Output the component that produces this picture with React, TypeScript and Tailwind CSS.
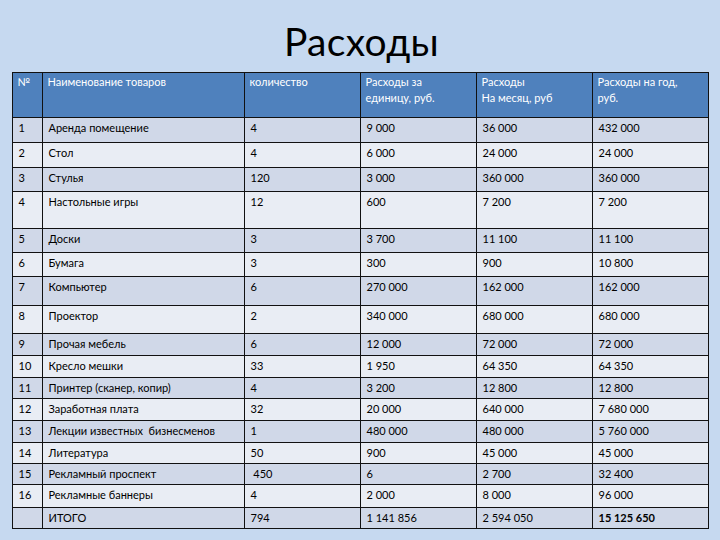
const headers = [
  "№",
  "Наименование товаров",
  "количество",
  "Расходы за\nединицу, руб.",
  "Расходы\nНа месяц, руб",
  "Расходы на год,\nруб.",
];

const colWidths = ["w-[30px]", "w-[202px]", "w-[116px]", "w-[116px]", "w-[116px]", "w-[116px]"];

interface Row {
  n: string;
  name: string;
  qty: string;
  unit: string;
  month: string;
  year: string;
  h: string;
}

const rows: Row[] = [
  { n: "1", name: "Аренда помещение", qty: "4", unit: "9 000", month: "36 000", year: "432 000", h: "h-[25px]" },
  { n: "2", name: "Стол", qty: "4", unit: "6 000", month: "24 000", year: "24 000", h: "h-[25px]" },
  { n: "3", name: "Стулья", qty: "120", unit: "3 000", month: "360 000", year: "360 000", h: "h-[24px]" },
  { n: "4", name: "Настольные игры", qty: "12", unit: "600", month: "7 200", year: "7 200", h: "h-[37px]" },
  { n: "5", name: "Доски", qty: "3", unit: "3 700", month: "11 100", year: "11 100", h: "h-[24px]" },
  { n: "6", name: "Бумага", qty: "3", unit: "300", month: "900", year: "10 800", h: "h-[24px]" },
  { n: "7", name: "Компьютер", qty: "6", unit: "270 000", month: "162 000", year: "162 000", h: "h-[29px]" },
  { n: "8", name: "Проектор", qty: "2", unit: "340 000", month: "680 000", year: "680 000", h: "h-[28px]" },
  { n: "9", name: "Прочая мебель", qty: "6", unit: "12 000", month: "72 000", year: "72 000", h: "h-[22px]" },
  { n: "10", name: "Кресло мешки", qty: "33", unit: "1 950", month: "64 350", year: "64 350", h: "h-[22px]" },
  { n: "11", name: "Принтер (сканер, копир)", qty: "4", unit: "3 200", month: "12 800", year: "12 800", h: "h-[21px]" },
  { n: "12", name: "Заработная плата", qty: "32", unit: "20 000", month: "640 000", year: "7 680 000", h: "h-[22px]" },
  { n: "13", name: "Лекции известных  бизнесменов", qty: "1", unit: "480 000", month: "480 000", year: "5 760 000", h: "h-[22px]" },
  { n: "14", name: "Литература", qty: "50", unit: "900", month: "45 000", year: "45 000", h: "h-[21px]" },
  { n: "15", name: "Рекламный проспект", qty: " 450", unit: "6", month: "2 700", year: "32 400", h: "h-[21px]" },
  { n: "16", name: "Рекламные баннеры", qty: "4", unit: "2 000", month: "8 000", year: "96 000", h: "h-[23px]" },
  { n: "", name: "ИТОГО", qty: "794", unit: "1 141 856", month: "2 594 050", year: "15 125 650", h: "h-[21px]" },
];

export default function App() {
  return (
    <div
      className="w-[720px] h-[540px] bg-[#c6d9f0] overflow-hidden flex flex-col items-center"
      style={{ fontFamily: "Lato, 'Open Sans', sans-serif" }}
    >
      <h1 className="mt-[21px] h-[51px] text-[39px] leading-[40px] text-black tracking-[0.3px] pl-[3px]">Расходы</h1>
      <table className="border-collapse border-[1.5px] border-[#111] text-[11px] text-black">
        <thead>
          <tr className="h-[45px] bg-[#4f81bd] text-white">
            {headers.map((h, i) => (
              <th
                key={i}
                className={`${colWidths[i]} border border-[#111] align-top text-left font-normal px-[5px] pt-[1px] leading-[16px] whitespace-pre-line`}
              >
                {h}
              </th>
            ))}
          </tr>
        </thead>
        <tbody>
          {rows.map((r, i) => (
            <tr key={i} className={`${r.h} ${i % 2 === 0 ? "bg-[#d0d8e8]" : "bg-[#e9edf4]"}`}>
              {[r.n, r.name, r.qty, r.unit, r.month, r.year].map((c, j) => (
                <td
                  key={j}
                  className={`border border-[#111] align-top pl-[6px] pr-[4px] pt-[3px] leading-[14px] whitespace-pre ${
                    i === rows.length - 1 && j === 5 ? "font-bold" : ""
                  }`}
                >
                  {c}
                </td>
              ))}
            </tr>
          ))}
        </tbody>
      </table>
    </div>
  );
}
